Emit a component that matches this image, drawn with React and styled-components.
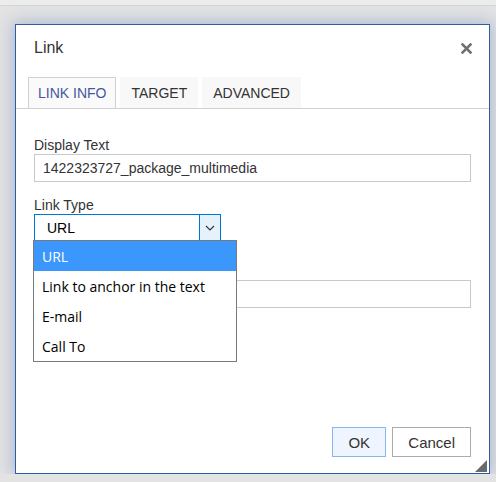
import React from "react";
import styled, { createGlobalStyle } from "styled-components";

const GlobalStyle = createGlobalStyle`
  html, body {
    margin: 0;
    padding: 0;
    background: #e3e3e3;
    font-family: "Liberation Sans", Arial, sans-serif;
  }
`;

const linkTypes = ["URL", "Link to anchor in the text", "E-mail", "Call To"];

const App = () => {
  const [tab, setTab] = React.useState("LINK INFO");
  const [type, setType] = React.useState("URL");
  return (
    <>
      <GlobalStyle />
      <TopStrip />
      <Page>
        <Dialog>
          <Header>
            <Title>Link</Title>
            <Close aria-label="close">
              <svg width="11" height="11" viewBox="0 0 11 11">
                <path
                  d="M1.5 1.5 L9.5 9.5 M9.5 1.5 L1.5 9.5"
                  stroke="#707070"
                  strokeWidth="2.6"
                  strokeLinecap="square"
                />
              </svg>
            </Close>
          </Header>
          <TabBar>
            {["LINK INFO", "TARGET", "ADVANCED"].map((t) => (
              <Tab key={t} $active={tab === t} onClick={() => setTab(t)}>
                {t}
              </Tab>
            ))}
          </TabBar>
          <Body>
            <Label>Display Text</Label>
            <Input defaultValue="1422323727_package_multimedia" />
            <Label $gap={15}>Link Type</Label>
            <Select>
              <SelectValue>{type}</SelectValue>
              <ArrowBox>
                <svg width="10" height="6" viewBox="0 0 10 6">
                  <path
                    d="M1 1 L5 5 L9 1"
                    fill="none"
                    stroke="#333"
                    strokeWidth="1.1"
                  />
                </svg>
              </ArrowBox>
              <Options>
                {linkTypes.map((o) => (
                  <Option
                    key={o}
                    $selected={o === type}
                    onClick={() => setType(o)}
                  >
                    {o}
                  </Option>
                ))}
              </Options>
            </Select>
            {/* the URL field's label sits under the open list */}
            <Input defaultValue="" $gap={39} />
          </Body>
          <Footer>
            <Button $primary>OK</Button>
            <Button>Cancel</Button>
          </Footer>
          <Grip />
        </Dialog>
      </Page>
    </>
  );
};

const TopStrip = styled.div`
  height: 5px;
  background: #ececec;
  border-bottom: 1px solid #d6d6d6;
`;

const Page = styled.div`
  padding: 18px 0 0 15px;
`;

const Dialog = styled.div`
  position: relative;
  box-sizing: border-box;
  width: 475px;
  height: 450px;
  background: #fff;
  border: 1px solid #2f5ca8;
  box-shadow: 0 0 16px 2px rgba(70, 105, 175, 0.35);
  display: flex;
  flex-direction: column;
`;

const Header = styled.div`
  height: 52px;
  box-sizing: border-box;
  padding: 14px 17px 0 18px;
  display: flex;
  justify-content: space-between;
  align-items: flex-start;
`;

const Title = styled.div`
  font-size: 16px;
  line-height: 18px;
  color: #333;
`;

const Close = styled.div`
  width: 11px;
  height: 11px;
  margin-top: 4px;
  cursor: pointer;
  display: flex;
`;

const TabBar = styled.div`
  display: flex;
  gap: 4px;
  padding-left: 12px;
  height: 31px;
  border-bottom: 1px solid #d1d1d1;
`;

const Tab = styled.div`
  box-sizing: border-box;
  height: 31px;
  padding: 0 ${(p) => (p.$active ? "9px" : "10px")};
  display: flex;
  align-items: center;
  font-size: 14px;
  color: ${(p) => (p.$active ? "#4557a0" : "#333")};
  background: ${(p) => (p.$active ? "#fafafa" : "#f8f8f8")};
  border: 1px solid ${(p) => (p.$active ? "#d1d1d1" : "transparent")};
  border-bottom: none;
  cursor: pointer;
`;

const Body = styled.div`
  flex: 1;
  padding: 28px 18px 0 18px;
  display: flex;
  flex-direction: column;
`;

const Label = styled.div`
  font-size: 14px;
  line-height: 16px;
  color: #333;
  margin-top: ${(p) => p.$gap || 0}px;
  margin-bottom: 1px;
`;

const Input = styled.input`
  box-sizing: border-box;
  height: 28px;
  width: 100%;
  margin: ${(p) => p.$gap || 0}px 0 0;
  border: 1px solid #c7cacd;
  padding: 0 8px;
  font-family: "Liberation Sans", Arial, sans-serif;
  font-size: 14px;
  color: #333;
  outline: none;
`;

const Select = styled.div`
  position: relative;
  box-sizing: border-box;
  width: 187px;
  height: 27px;
  border: 1px solid #0078d7;
  display: flex;
  align-items: stretch;
`;

const SelectValue = styled.div`
  flex: 1;
  padding-left: 12px;
  display: flex;
  align-items: center;
  font-size: 14px;
  color: #000;
`;

const ArrowBox = styled.div`
  width: 20px;
  background: #e5f1fb;
  border-left: 1px solid #0078d7;
  display: flex;
  align-items: center;
  justify-content: center;
`;

const Options = styled.div`
  position: absolute;
  top: 100%;
  left: -2px;
  width: 204px;
  box-sizing: border-box;
  background: #fff;
  border: 1px solid #7a7a7a;
  z-index: 2;
`;

const Option = styled.div`
  height: 30px;
  padding-left: 8px;
  display: flex;
  align-items: center;
  font-family: "Open Sans", "Noto Sans", sans-serif;
  font-size: 14px;
  color: ${(p) => (p.$selected ? "#fff" : "#000")};
  background: ${(p) => (p.$selected ? "#3b97fb" : "#fff")};
  cursor: default;
`;

const Footer = styled.div`
  display: flex;
  justify-content: flex-end;
  gap: 6px;
  padding: 0 18px 16px 0;
`;

const Button = styled.button`
  box-sizing: border-box;
  height: 30px;
  padding: 0 15px;
  min-width: 54px;
  font-family: "Liberation Sans", Arial, sans-serif;
  font-size: 15px;
  color: #333;
  background: ${(p) => (p.$primary ? "#eef5fe" : "#fff")};
  border: 1px solid ${(p) => (p.$primary ? "#8ab6ef" : "#ababab")};
  border-radius: 0;
  cursor: pointer;
`;

const Grip = styled.div`
  position: absolute;
  right: 2px;
  bottom: 1px;
  width: 0;
  height: 0;
  border-left: 12px solid transparent;
  border-bottom: 12px solid #6a6a6a;
`;

export default App;
